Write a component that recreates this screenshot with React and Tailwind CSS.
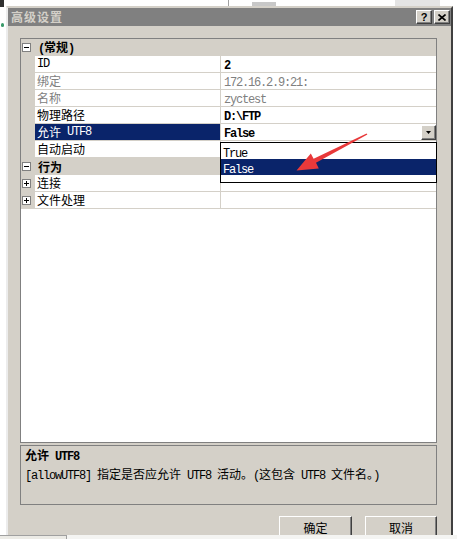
import React from 'react';

const HAN = /([\u3000-\u303f\u4e00-\u9fff\uff00-\uffef]+)/;

// SimSun-like text: Han glyphs 12px, latin runs in a 6px-advance mono
const T = ({ children }) =>
  String(children ?? '')
    .split(HAN)
    .filter(Boolean)
    .map((p, i) =>
      HAN.test(p) ? (
        <span key={i} className="font-['Noto_Sans_CJK_SC',sans-serif] text-[12px]">
          {p}
        </span>
      ) : (
        <span key={i} className="whitespace-pre font-['Liberation_Mono',monospace] text-[12px] tracking-[-1.2px]">
          {p}
        </span>
      )
    );

const raised =
  'border border-t-white border-l-white border-r-[#404040] border-b-[#404040] bg-[#d4d0c8] shadow-[inset_-1px_-1px_#808080]';

const Box = ({ minus }) => (
  <svg width="9" height="9" viewBox="0 0 9 9" className="block">
    <rect x="0.5" y="0.5" width="8" height="8" fill="white" stroke="#808080" />
    <path d="M2 4.5h5" stroke="black" />
    {!minus && <path d="M4.5 2v5" stroke="black" />}
  </svg>
);

const rows = [
  { cat: '(常规)' },
  { name: 'ID', value: '2', bold: true },
  { name: '绑定', value: '172.16.2.9:21:', dim: true },
  { name: '名称', value: 'zyctest', dim: true },
  { name: '物理路径', value: 'D:\\FTP', bold: true },
  { name: '允许 UTF8', value: 'False', bold: true, sel: true },
  { name: '自动启动', value: '' },
  { cat: '行为' },
  { name: '连接', value: '', plus: true },
  { name: '文件处理', value: '', plus: true },
];

const App = () => {
  return (
    <div className="relative h-[539px] w-[457px] overflow-hidden bg-white text-black">
      {/* bits of the window underneath */}
      <div className="absolute left-0 top-0 h-[7px] w-[4px] bg-[#303030]" />
      <div className="absolute left-[1px] top-[23px] h-[4px] w-[3px] rounded-full bg-[#3a9a6a]" />
      <div className="absolute left-[228px] top-0 h-[8px] w-px bg-[#a0a0a0]" />
      <div className="absolute left-[252px] top-[2px] h-[4px] w-[24px] bg-[#c8c8c8]" />
      <div className="absolute left-[395px] top-0 h-[6px] w-[45px] bg-[#e4e4e4]" />

      {/* dialog */}
      <div className="absolute left-[6px] top-[6px] flex h-[540px] w-[447px] flex-col border-2 border-t-[#d4d0c8] border-l-[#ececec] border-r-[#404040] border-b-[#404040] bg-[#d4d0c8]">
        <div className="flex h-[18px] items-center justify-between bg-[#808080] pl-[3px] pr-[1px]">
          <span className="font-['Noto_Sans_CJK_SC',sans-serif] text-[12px] font-bold leading-[18px] tracking-[1px] text-[#d4d0c8]">
            高级设置
          </span>
          <div className="flex gap-[2px]">
            <div className={`${raised} flex h-[14px] w-[16px] items-center justify-center`}>
              <span className="font-['Liberation_Sans',sans-serif] text-[11px] font-bold leading-none">?</span>
            </div>
            <div className={`${raised} flex h-[14px] w-[16px] items-center justify-center`}>
              <svg width="8" height="7" viewBox="0 0 8 7">
                <path d="M0.5 0.5l7 6M7.5 0.5l-7 6" stroke="black" strokeWidth="1.6" />
              </svg>
            </div>
          </div>
        </div>

        <div className="flex flex-1 flex-col pl-[12px] pr-[14px] pt-[12px]">
          {/* property grid */}
          <div className="h-[405px] border border-[#808080] bg-white">
            {rows.map((r, i) =>
              r.cat ? (
                <div key={i} className="flex h-[17px] items-center border-b border-[#d4d0c8] bg-[#d4d0c8]">
                  <div className="flex w-[14px] pl-[1px]">
                    <Box minus />
                  </div>
                  <div className="pl-[3px] font-bold leading-[16px]">
                    <T>{r.cat}</T>
                  </div>
                </div>
              ) : (
                <div key={i} className="flex h-[17px] border-b border-[#d4d0c8]">
                  <div className="flex w-[14px] items-center bg-[#d4d0c8] pl-[1px]">{r.plus && <Box />}</div>
                  <div
                    className={`flex w-[186px] items-center border-r border-[#d4d0c8] pl-[2px] leading-[16px] ${
                      r.sel ? 'bg-[#0a246a] text-white' : r.dim ? 'text-[#808080]' : ''
                    }`}
                  >
                    <T>{r.name}</T>
                  </div>
                  <div className="flex flex-1 items-center justify-between pl-[3px] leading-[16px]">
                    <span className={r.bold ? 'font-bold' : r.dim ? 'text-[#808080]' : ''}>
                      <T>{r.value}</T>
                    </span>
                    {r.sel && (
                      <div className={`${raised} flex h-[15px] w-[15px] items-center justify-center self-end`}>
                        <svg width="5" height="3" viewBox="0 0 5 3">
                          <path d="M0 0h5L2.5 3z" fill="black" />
                        </svg>
                      </div>
                    )}
                  </div>
                </div>
              )
            )}
          </div>

          {/* description */}
          <div className="mt-[2px] h-[60px] border border-[#808080] pl-[4px] leading-[16px]">
            <div className="font-bold">
              <T>允许 UTF8</T>
            </div>
            <div>
              <T>[allowUTF8] 指定是否应允许 UTF8 活动。(这包含 UTF8 文件名。)</T>
            </div>
          </div>

          <div className="mt-[11px] flex justify-end gap-[13px]">
            <button className={`${raised} h-[23px] w-[73px] leading-[20px]`}>
              <T>确定</T>
            </button>
            <button className={`${raised} h-[23px] w-[72px] leading-[20px]`}>
              <T>取消</T>
            </button>
          </div>
        </div>
      </div>

      {/* open dropdown list */}
      <div className="absolute left-[220px] top-[142px] h-[41px] w-[217px] border border-black bg-white leading-[16px]">
        <div className="h-[16px] pl-[2px]">
          <T>True</T>
        </div>
        <div className="h-[16px] bg-[#0a246a] pl-[2px] text-white">
          <T>False</T>
        </div>
      </div>

      {/* bottom strip of the window behind */}
      <div className="absolute bottom-0 left-0 flex h-[4px] w-full bg-[#f4f4f2]">
        <div className="w-[67px] border-r border-t border-[#a0a0a0] bg-[#ecebe6]" />
      </div>

      {/* red annotation arrow */}
      <svg className="pointer-events-none absolute left-0 top-0" width="457" height="539" viewBox="0 0 457 539">
        <polygon
          points="366.6,133.4 367.4,134.6 316,162.8 318.8,168.5 296.5,170.5 310.8,153.4 313.6,158.8"
          fill="#e8393a"
        />
      </svg>
    </div>
  );
};

export default App;
